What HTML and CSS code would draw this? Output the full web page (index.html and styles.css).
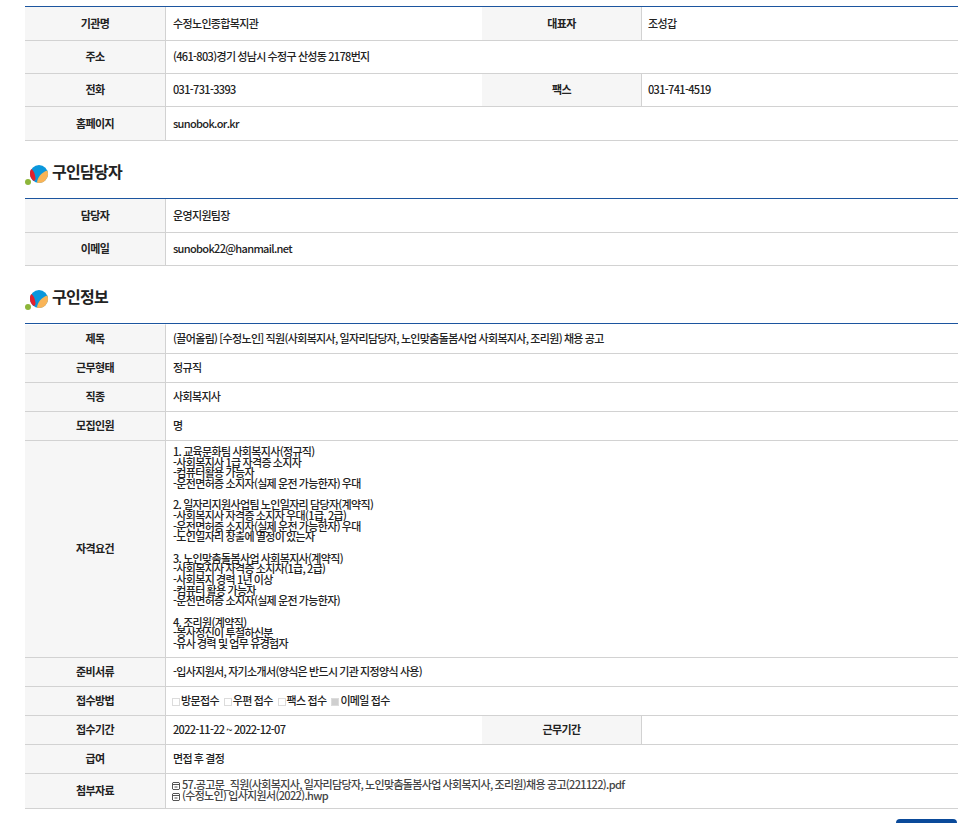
FILE: index.html
```html
<!DOCTYPE html>
<html lang="ko">
<head>
<meta charset="utf-8">
<title>구인정보</title>
<link rel="stylesheet" href="styles.css">
</head>
<body>
<main class="page">
<table class="info">
<colgroup><col class="c1"><col class="c2"><col class="c3"><col></colgroup>
<tr class="r34"><th>기관명</th><td>수정노인종합복지관</td><th>대표자</th><td>조성갑</td></tr>
<tr class="r33"><th>주소</th><td colspan="3">(461-803)경기 성남시 수정구 산성동 2178번지</td></tr>
<tr class="r33"><th>전화</th><td>031-731-3393</td><th>팩스</th><td>031-741-4519</td></tr>
<tr class="r34"><th>홈페이지</th><td colspan="3">sunobok.or.kr</td></tr>
</table>
<h2 class="title"><svg class="logo" viewBox="0 0 24 24" width="24" height="24" aria-hidden="true"><circle cx="14" cy="11" r="9" fill="#0a97dc"/><path d="M6.500 6c-1.500 1.500-1.500 2.500-1.500 5 0 3 1.500 5.500 4 7 1-.5 1.500-1.500 1.500-3C10 11 9 8 6.500 6z" fill="#e2202c"/><path d="M22.300 7.500A9 9 0 0 1 12 19.800c.5-5.500 4.500-10.500 10.300-12.300z" fill="#f9b457"/><circle cx="3" cy="19" r="3" fill="#8db63a"/></svg>구인담당자</h2>
<table class="info">
<colgroup><col class="c1"><col></colgroup>
<tr class="r34"><th>담당자</th><td>운영지원팀장</td></tr>
<tr class="r33"><th>이메일</th><td>sunobok22@hanmail.net</td></tr>
</table>
<h2 class="title"><svg class="logo" viewBox="0 0 24 24" width="24" height="24" aria-hidden="true"><circle cx="14" cy="11" r="9" fill="#0a97dc"/><path d="M6.500 6c-1.500 1.500-1.500 2.500-1.500 5 0 3 1.500 5.500 4 7 1-.5 1.500-1.500 1.500-3C10 11 9 8 6.500 6z" fill="#e2202c"/><path d="M22.300 7.500A9 9 0 0 1 12 19.800c.5-5.500 4.500-10.500 10.300-12.300z" fill="#f9b457"/><circle cx="3" cy="19" r="3" fill="#8db63a"/></svg>구인정보</h2>
<table class="info gap">
<colgroup><col class="c1"><col class="c2"><col class="c3"><col></colgroup>
<tr class="r29"><th>제목</th><td colspan="3">(끌어올림) [수정노인] 직원(사회복지사, 일자리담당자, 노인맞춤돌봄사업 사회복지사, 조리원) 채용 공고</td></tr>
<tr class="r29"><th>근무형태</th><td colspan="3">정규직</td></tr>
<tr class="r29"><th>직종</th><td colspan="3">사회복지사</td></tr>
<tr class="r29"><th>모집인원</th><td colspan="3">명</td></tr>
<tr><th>자격요건</th><td colspan="3" class="dense">1. 교육문화팀 사회복지사(정규직)<br>-사회복지사 1급 자격증 소지자<br>-컴퓨터활용 가능자<br>-운전면허증 소지자(실제 운전 가능한자) 우대<br><br>2. 일자리지원사업팀 노인일자리 담당자(계약직)<br>-사회복지사 자격증 소지자 우대(1급, 2급)<br>-운전면허증 소지자(실제 운전 가능한자) 우대<br>-노인일자리 창출에 열정이 있는자<br><br>3. 노인맞춤돌봄사업 사회복지사(계약직)<br>-사회복지사 자격증 소지자(1급, 2급)<br>-사회복지 경력 1년 이상<br>-컴퓨터 활용 가능자<br>-운전면허증 소지자(실제 운전 가능한자)<br><br>4. 조리원(계약직)<br>-봉사정신이 투철하신분<br>-유사 경력 및 업무 유경험자</td></tr>
<tr class="r29"><th>준비서류</th><td colspan="3">-입사지원서, 자기소개서(양식은 반드시 기관 지정양식 사용)</td></tr>
<tr class="r29"><th>접수방법</th><td colspan="3" class="methods"><span class="m"><i class="box"></i>방문접수</span><span class="m"><i class="box"></i>우편 접수</span><span class="m"><i class="box"></i>팩스 접수</span><span class="m"><i class="box on"></i>이메일 접수</span></td></tr>
<tr class="r29"><th>접수기간</th><td>2022-11-22 ~ 2022-12-07</td><th>근무기간</th><td></td></tr>
<tr class="r29"><th>급여</th><td colspan="3">면접 후 결정</td></tr>
<tr class="r35"><th>첨부자료</th><td colspan="3" class="files"><svg class="clip" viewBox="0 0 8 8" width="8" height="8" aria-hidden="true"><path d="M1 .5h6l.5.5v6l-.5.5H1l-.5-.5V1zM.5 2.500h7M2.500 5h3" fill="none" stroke="#555"/></svg> 57.공고문_직원(사회복지사, 일자리담당자, 노인맞춤돌봄사업 사회복지사, 조리원)채용 공고(221122).pdf<br><svg class="clip" viewBox="0 0 8 8" width="8" height="8" aria-hidden="true"><path d="M1 .5h6l.5.5v6l-.5.5H1l-.5-.5V1zM.5 2.500h7M2.500 5h3" fill="none" stroke="#555"/></svg> (수정노인) 입사지원서(2022).hwp</td></tr>
</table>
<div class="actions"><span class="btn"></span></div>
</main>
</body>
</html>
```
FILE: styles.css
```css
* { box-sizing: border-box; }
html, body { margin: 0; padding: 0; background: #fff; overflow: hidden; height: 823px; }
body { font-family: "Noto Sans CJK KR", "Noto Sans", sans-serif; color: #222; }
.page { padding: 6px 11px 0 25px; }
.info { width: 933px; table-layout: fixed; border-collapse: separate; border-spacing: 0; border-top: 1px solid #1c559f; font-size: 11px; letter-spacing: -0.66px; word-spacing: -0.5px; }
.c1 { width: 141px; }
.c2 { width: 316px; }
.c3 { width: 160px; }
.info th, .info td { border-bottom: 1px solid #d2d2d2; padding: 0 7px 2px; font-weight: 500; text-align: left; }
.info th { background: #f6f6f6; text-align: center; font-weight: 700; border-right: 1px solid #d2d2d2; padding: 0 0 2px; }
.info td + th + td { padding-left: 6px; }
.gap tr:first-child th, .gap tr:first-child td { height: 30px; border-top: 1px solid #fff; }
.r33 th, .r33 td { height: 33px; }
.r34 th, .r34 td { height: 34px; }
.r29 th, .r29 td { height: 29px; }
.r35 th, .r35 td { height: 35px; }
.info .dense { line-height: 10.67px; padding-top: 5px; padding-bottom: 8px; }
.info .files { line-height: 10.6px; color: #444; }
.title { display: flex; align-items: flex-start; margin: 0; padding: 22px 0 11px; font-size: 16px; line-height: 16px; font-weight: 700; color: #222; letter-spacing: -0.75px; }
.logo { flex: none; margin-right: 3px; }
.methods { white-space: nowrap; }
.m { margin-right: 6px; }
.box { display: inline-block; width: 8px; height: 8px; margin: 0 1px 0 -1px; border: 1px solid #dcdcdc; background: #fff; vertical-align: -1px; }
.box.on { background: #cfcfcf; }
.clip { vertical-align: -1px; margin-left: -1px; }
.actions { display: flex; justify-content: flex-end; padding: 10px 1px 0 0; }
.btn { display: block; width: 61px; height: 30px; background: #0a4a9a; border-radius: 4px; }
```
